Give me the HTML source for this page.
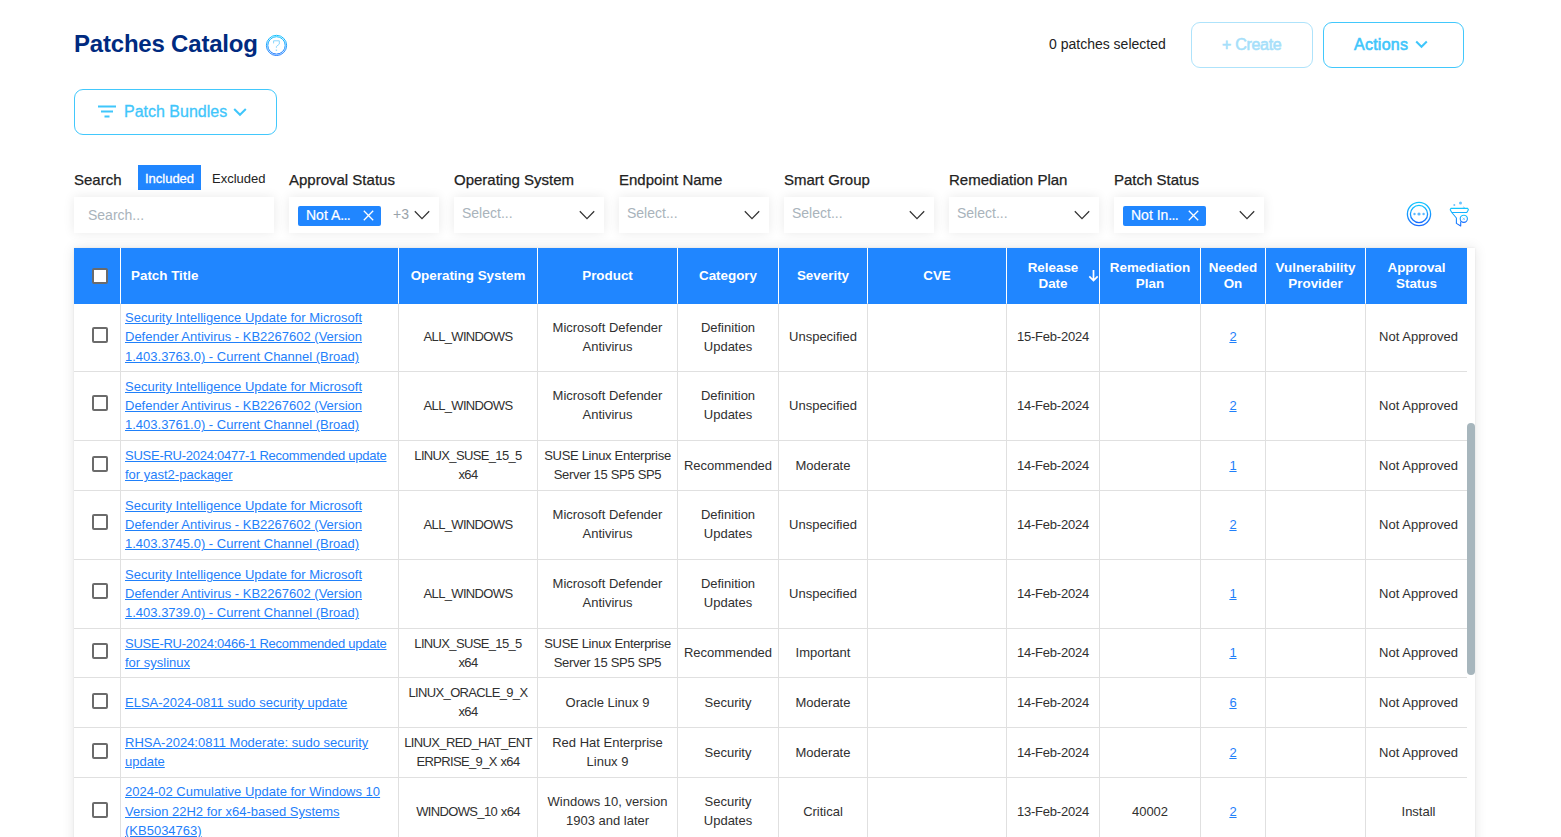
<!DOCTYPE html>
<html><head><meta charset="utf-8"><style>
*{box-sizing:border-box;margin:0;padding:0}
html,body{width:1561px;height:837px;overflow:hidden;background:#fff;font-family:"Liberation Sans", sans-serif;color:#222}
.abs{position:absolute}
.title{left:74px;top:26px;font-size:24px;font-weight:700;color:#002a80;letter-spacing:-0.2px;white-space:nowrap;line-height:36px}
.btn{position:absolute;border:1px solid #42c8fc;border-radius:9px;background:#fff;color:#3fc6fb;font-size:15px;font-weight:700;display:flex;align-items:center;justify-content:center;white-space:nowrap}
.lbl{position:absolute;font-size:15px;color:#222;white-space:nowrap;-webkit-text-stroke:0.25px #222;line-height:18px}
.sel{position:absolute;top:197px;height:36px;width:150px;background:#fff;box-shadow:0 0 12px rgba(0,0,0,0.09)}
.ph{position:absolute;left:8px;top:8px;font-size:14px;color:#a9b3bb;white-space:nowrap;line-height:16px}
.chev{position:absolute;top:11px}
.chip{position:absolute;top:9px;height:20px;background:#2086ff;border-radius:2px;color:#fff;font-size:14px;white-space:nowrap;line-height:18px;padding-left:8px;-webkit-text-stroke:0.2px #fff}
.tbl{position:absolute;left:74px;top:248px;width:1401px;height:620px;background:#fff;box-shadow:0 0 12px rgba(0,0,0,0.10),0 0 2px rgba(0,0,0,0.08);overflow:hidden}
.hd{position:absolute;top:0;height:56px;padding-bottom:1px;background:#2086ff;color:#fff;font-weight:700;font-size:13.4px;line-height:16px;display:flex;align-items:center;justify-content:center;text-align:center;white-space:nowrap}
.vsep{position:absolute;width:1px}
.cell{position:absolute;display:flex;align-items:center;justify-content:center;text-align:center;font-size:13px;line-height:19.3px;color:#222;white-space:nowrap}
.ln{position:absolute;font-size:13px;line-height:19px;color:#303030;white-space:nowrap;text-align:center;height:19px}
.lnk{color:#1f80fa;text-decoration:underline;text-underline-offset:1px}
.cb{position:absolute;width:16px;height:16px;border:2px solid #6b6b6b;border-radius:2px;background:#fff}
</style></head><body>
<div class="abs title">Patches Catalog</div><svg class="abs" style="left:265px;top:34px" width="23" height="23" viewBox="0 0 23 23"><defs><linearGradient id="g0" x1="0" y1="0" x2="0" y2="1"><stop offset="0" stop-color="#15c3ff"/><stop offset="1" stop-color="#1a78ff"/></linearGradient></defs><circle cx="11.5" cy="11.4" r="10.1" fill="none" stroke="url(#g0)" stroke-width="1"/><circle cx="11.5" cy="11.4" r="8.7" fill="none" stroke="url(#g0)" stroke-width="1"/><path d="M8.6 9.4V6.8H14.3V10.1L11.4 12.5V13.8" fill="none" stroke="#7fd2fd" stroke-width="0.9"/><rect x="10.7" y="15.6" width="1.4" height="1.2" fill="#8ad3fd"/></svg><div class="abs" style="left:1049px;top:36px;font-size:14px;color:#222;white-space:nowrap;line-height:16px">0 patches selected</div><div class="btn" style="left:1191px;top:22px;width:122px;height:46px;border-color:#aee3fb;color:#a6dffa;font-weight:400;font-size:16px;-webkit-text-stroke:0.6px #a6dffa"><span style="position:absolute;left:30px;top:13px;line-height:18px;letter-spacing:-0.3px">+ Create</span></div><div class="btn" style="left:1323px;top:22px;width:141px;height:46px;font-weight:400;font-size:16px;-webkit-text-stroke:0.6px #3fc6fb"><span style="position:absolute;left:30px;top:13px;line-height:18px;letter-spacing:0.25px">Actions</span><svg style="position:absolute;left:91px;top:17px" width="13" height="9" viewBox="0 0 13 9"><path d="M1.2 1.5 6.5 6.8 11.8 1.5" fill="none" stroke="#3fc6fb" stroke-width="2"/></svg></div><div class="btn" style="left:74px;top:89px;width:203px;height:46px;font-weight:400;font-size:16px;-webkit-text-stroke:0.3px #3fc6fb;justify-content:flex-start"><svg style="position:absolute;left:22px;top:15px" width="20" height="14" viewBox="0 0 20 14"><path d="M1 1.5h18M4 6.5h12M7.5 11.5h5" stroke="#3fc6fb" stroke-width="2"/></svg><span style="position:absolute;left:49px;top:13px;line-height:18px">Patch Bundles</span><svg style="position:absolute;left:158px;top:17px" width="14" height="10" viewBox="0 0 14 10"><path d="M1.2 2 7 7.8 12.8 2" fill="none" stroke="#3fc6fb" stroke-width="2"/></svg></div><div class="lbl" style="left:74px;top:171px">Search</div><div class="lbl" style="left:289px;top:171px">Approval Status</div><div class="lbl" style="left:454px;top:171px">Operating System</div><div class="lbl" style="left:619px;top:171px">Endpoint Name</div><div class="lbl" style="left:784px;top:171px">Smart Group</div><div class="lbl" style="left:949px;top:171px">Remediation Plan</div><div class="lbl" style="left:1114px;top:171px">Patch Status</div><div class="abs" style="left:138px;top:165px;width:63px;height:25px;background:#2086ff;color:#fff;font-size:13px;line-height:27px;text-align:center;-webkit-text-stroke:0.3px #fff">Included</div><div class="abs" style="left:212px;top:166px;font-size:13px;line-height:25px;color:#222">Excluded</div><div class="sel" style="left:74px;width:200px"><div class="ph" style="left:14px;top:10px">Search...</div></div><div class="sel" style="left:289px"><div class="chip" style="left:9px;width:83px">Not A<span style="letter-spacing:-0.7px">...</span><svg style="position:absolute;left:65px;top:4px" width="11" height="11" viewBox="0 0 11 11"><path d="M0.8 0.8 10.2 10.2M10.2 0.8 0.8 10.2" stroke="#fff" stroke-width="1.3"/></svg></div><div class="abs" style="left:104px;top:9px;font-size:14px;color:#9aa3aa;line-height:16px">+3</div><svg class="chev" style="left:125px" width="16" height="14" viewBox="0 0 16 14"><path d="M0.8 3.3 8 10.6 15.2 3.3" fill="none" stroke="#333" stroke-width="1.25"/></svg></div><div class="sel" style="left:454px"><div class="ph">Select...</div><svg class="chev" style="left:125px" width="16" height="14" viewBox="0 0 16 14"><path d="M0.8 3.3 8 10.6 15.2 3.3" fill="none" stroke="#333" stroke-width="1.25"/></svg></div><div class="sel" style="left:619px"><div class="ph">Select...</div><svg class="chev" style="left:125px" width="16" height="14" viewBox="0 0 16 14"><path d="M0.8 3.3 8 10.6 15.2 3.3" fill="none" stroke="#333" stroke-width="1.25"/></svg></div><div class="sel" style="left:784px"><div class="ph">Select...</div><svg class="chev" style="left:125px" width="16" height="14" viewBox="0 0 16 14"><path d="M0.8 3.3 8 10.6 15.2 3.3" fill="none" stroke="#333" stroke-width="1.25"/></svg></div><div class="sel" style="left:949px"><div class="ph">Select...</div><svg class="chev" style="left:125px" width="16" height="14" viewBox="0 0 16 14"><path d="M0.8 3.3 8 10.6 15.2 3.3" fill="none" stroke="#333" stroke-width="1.25"/></svg></div><div class="sel" style="left:1114px"><div class="chip" style="left:9px;width:83px">Not In<span style="letter-spacing:-0.7px">...</span><svg style="position:absolute;left:65px;top:4px" width="11" height="11" viewBox="0 0 11 11"><path d="M0.8 0.8 10.2 10.2M10.2 0.8 0.8 10.2" stroke="#fff" stroke-width="1.3"/></svg></div><svg class="chev" style="left:125px" width="16" height="14" viewBox="0 0 16 14"><path d="M0.8 3.3 8 10.6 15.2 3.3" fill="none" stroke="#333" stroke-width="1.25"/></svg></div><svg class="abs" style="left:1405px;top:200px" width="28" height="28" viewBox="0 0 28 28"><defs><linearGradient id="g1" x1="0" y1="0" x2="0" y2="1"><stop offset="0" stop-color="#12c6ff"/><stop offset="1" stop-color="#1a6dff"/></linearGradient></defs><circle cx="14" cy="14" r="11.6" fill="none" stroke="url(#g1)" stroke-width="1.3"/><circle cx="14" cy="14" r="8.6" fill="none" stroke="url(#g1)" stroke-width="1.3"/><circle cx="9.5" cy="14" r="1.2" fill="#5cb8ff"/><circle cx="14" cy="14" r="1.6" fill="#5cb8ff"/><circle cx="18.6" cy="14" r="1.2" fill="#5cb8ff"/></svg><svg class="abs" style="left:1448px;top:200px" width="22" height="28" viewBox="0 0 22 28"><defs><linearGradient id="g2" x1="0" y1="0" x2="0" y2="1"><stop offset="0" stop-color="#12c6ff"/><stop offset="1" stop-color="#1a6dff"/></linearGradient></defs><path d="M3 8.4h16.6l.8 1.3-1.6 2.8h-15l-1.6-2.8z M3.8 12.5l4.6 5.5v5.4l4.3 2.6v-4.4" fill="none" stroke="url(#g2)" stroke-width="1.1" stroke-linejoin="round"/><circle cx="15.8" cy="18.8" r="3.6" fill="none" stroke="url(#g2)" stroke-width="1.1"/><path d="M14.7 17.7l2.2 2.2M16.9 17.7l-2.2 2.2" stroke="#7cc6ff" stroke-width="0.9"/><circle cx="6.3" cy="5" r="1" fill="#6cc3ff"/><circle cx="12.5" cy="3" r="1.5" fill="#6cc3ff"/><path d="M14.8 7.8l1-0.8 1 .8" fill="none" stroke="#6cc3ff" stroke-width="0.9"/></svg><div class="tbl"><div class="hd" style="left:0;width:46px"></div><div class="cb" style="left:18px;top:20px"></div><div class="vsep" style="left:46px;top:0;height:56px;background:#fff"></div><div class="hd" style="left:47px;width:277px;justify-content:flex-start;padding-left:10px">Patch Title</div><div class="vsep" style="left:324px;top:0;height:56px;background:#fff"></div><div class="hd" style="left:325px;width:138px;justify-content:center;">Operating System</div><div class="vsep" style="left:463px;top:0;height:56px;background:#fff"></div><div class="hd" style="left:464px;width:139px;justify-content:center;">Product</div><div class="vsep" style="left:603px;top:0;height:56px;background:#fff"></div><div class="hd" style="left:604px;width:100px;justify-content:center;">Category</div><div class="vsep" style="left:704px;top:0;height:56px;background:#fff"></div><div class="hd" style="left:705px;width:88px;justify-content:center;">Severity</div><div class="vsep" style="left:793px;top:0;height:56px;background:#fff"></div><div class="hd" style="left:794px;width:138px;justify-content:center;">CVE</div><div class="vsep" style="left:932px;top:0;height:56px;background:#fff"></div><div class="hd" style="left:933px;width:92px;justify-content:center;">Release<br>Date<svg style="position:absolute;left:81px;top:21px" width="11" height="13" viewBox="0 0 11 13"><path d="M5.5 1v10.5M1.3 7.3l4.2 4.2 4.2-4.2" fill="none" stroke="#fff" stroke-width="1.7"/></svg></div><div class="vsep" style="left:1025px;top:0;height:56px;background:#fff"></div><div class="hd" style="left:1026px;width:100px;justify-content:center;">Remediation<br>Plan</div><div class="vsep" style="left:1126px;top:0;height:56px;background:#fff"></div><div class="hd" style="left:1127px;width:64px;justify-content:center;">Needed<br>On</div><div class="vsep" style="left:1191px;top:0;height:56px;background:#fff"></div><div class="hd" style="left:1192px;width:99px;justify-content:center;">Vulnerability<br>Provider</div><div class="vsep" style="left:1291px;top:0;height:56px;background:#fff"></div><div class="hd" style="left:1292px;width:101px;justify-content:center;">Approval<br>Status</div><div class="abs" style="left:0;top:123px;width:1393px;height:1px;background:#e0e0e0"></div><div class="cb" style="left:18px;top:79px"></div><div class="vsep" style="left:46px;top:55px;height:68px;background:#e0e0e0"></div><div class="ln" style="left:47px;top:60px;width:277px;text-align:left;padding-left:4px;"><span class="lnk">Security Intelligence Update for Microsoft</span></div><div class="ln" style="left:47px;top:79px;width:277px;text-align:left;padding-left:4px;"><span class="lnk">Defender Antivirus - KB2267602 (Version</span></div><div class="ln" style="left:47px;top:99px;width:277px;text-align:left;padding-left:4px;"><span class="lnk">1.403.3763.0) - Current Channel (Broad)</span></div><div class="vsep" style="left:324px;top:55px;height:68px;background:#e0e0e0"></div><div class="ln" style="left:325px;top:79px;width:138px;letter-spacing:-0.65px;word-spacing:0.8px;">ALL_WINDOWS</div><div class="vsep" style="left:463px;top:55px;height:68px;background:#e0e0e0"></div><div class="ln" style="left:464px;top:70px;width:139px;">Microsoft Defender</div><div class="ln" style="left:464px;top:89px;width:139px;">Antivirus</div><div class="vsep" style="left:603px;top:55px;height:68px;background:#e0e0e0"></div><div class="ln" style="left:604px;top:70px;width:100px;">Definition</div><div class="ln" style="left:604px;top:89px;width:100px;">Updates</div><div class="vsep" style="left:704px;top:55px;height:68px;background:#e0e0e0"></div><div class="ln" style="left:705px;top:79px;width:88px;">Unspecified</div><div class="vsep" style="left:793px;top:55px;height:68px;background:#e0e0e0"></div><div class="vsep" style="left:932px;top:55px;height:68px;background:#e0e0e0"></div><div class="ln" style="left:933px;top:79px;width:92px;"><span style="letter-spacing:-0.2px">15-Feb-2024</span></div><div class="vsep" style="left:1025px;top:55px;height:68px;background:#e0e0e0"></div><div class="vsep" style="left:1126px;top:55px;height:68px;background:#e0e0e0"></div><div class="ln" style="left:1127px;top:79px;width:64px;"><span class="lnk">2</span></div><div class="vsep" style="left:1191px;top:55px;height:68px;background:#e0e0e0"></div><div class="vsep" style="left:1291px;top:55px;height:68px;background:#e0e0e0"></div><div class="ln" style="left:1292px;top:79px;width:101px;padding-left:4px;">Not Approved</div><div class="abs" style="left:0;top:192px;width:1393px;height:1px;background:#e0e0e0"></div><div class="cb" style="left:18px;top:147px"></div><div class="vsep" style="left:46px;top:123px;height:69px;background:#e0e0e0"></div><div class="ln" style="left:47px;top:129px;width:277px;text-align:left;padding-left:4px;"><span class="lnk">Security Intelligence Update for Microsoft</span></div><div class="ln" style="left:47px;top:148px;width:277px;text-align:left;padding-left:4px;"><span class="lnk">Defender Antivirus - KB2267602 (Version</span></div><div class="ln" style="left:47px;top:167px;width:277px;text-align:left;padding-left:4px;"><span class="lnk">1.403.3761.0) - Current Channel (Broad)</span></div><div class="vsep" style="left:324px;top:123px;height:69px;background:#e0e0e0"></div><div class="ln" style="left:325px;top:148px;width:138px;letter-spacing:-0.65px;word-spacing:0.8px;">ALL_WINDOWS</div><div class="vsep" style="left:463px;top:123px;height:69px;background:#e0e0e0"></div><div class="ln" style="left:464px;top:138px;width:139px;">Microsoft Defender</div><div class="ln" style="left:464px;top:157px;width:139px;">Antivirus</div><div class="vsep" style="left:603px;top:123px;height:69px;background:#e0e0e0"></div><div class="ln" style="left:604px;top:138px;width:100px;">Definition</div><div class="ln" style="left:604px;top:157px;width:100px;">Updates</div><div class="vsep" style="left:704px;top:123px;height:69px;background:#e0e0e0"></div><div class="ln" style="left:705px;top:148px;width:88px;">Unspecified</div><div class="vsep" style="left:793px;top:123px;height:69px;background:#e0e0e0"></div><div class="vsep" style="left:932px;top:123px;height:69px;background:#e0e0e0"></div><div class="ln" style="left:933px;top:148px;width:92px;"><span style="letter-spacing:-0.2px">14-Feb-2024</span></div><div class="vsep" style="left:1025px;top:123px;height:69px;background:#e0e0e0"></div><div class="vsep" style="left:1126px;top:123px;height:69px;background:#e0e0e0"></div><div class="ln" style="left:1127px;top:148px;width:64px;"><span class="lnk">2</span></div><div class="vsep" style="left:1191px;top:123px;height:69px;background:#e0e0e0"></div><div class="vsep" style="left:1291px;top:123px;height:69px;background:#e0e0e0"></div><div class="ln" style="left:1292px;top:148px;width:101px;padding-left:4px;">Not Approved</div><div class="abs" style="left:0;top:242px;width:1393px;height:1px;background:#e0e0e0"></div><div class="cb" style="left:18px;top:208px"></div><div class="vsep" style="left:46px;top:192px;height:50px;background:#e0e0e0"></div><div class="ln" style="left:47px;top:198px;width:277px;text-align:left;padding-left:4px;"><span class="lnk"><span style="letter-spacing:-0.25px">SUSE-RU-2024:0477-1 Recommended update</span></span></div><div class="ln" style="left:47px;top:217px;width:277px;text-align:left;padding-left:4px;"><span class="lnk">for yast2-packager</span></div><div class="vsep" style="left:324px;top:192px;height:50px;background:#e0e0e0"></div><div class="ln" style="left:325px;top:198px;width:138px;letter-spacing:-0.65px;word-spacing:0.8px;">LINUX_SUSE_15_5</div><div class="ln" style="left:325px;top:217px;width:138px;letter-spacing:-0.65px;word-spacing:0.8px;">x64</div><div class="vsep" style="left:463px;top:192px;height:50px;background:#e0e0e0"></div><div class="ln" style="left:464px;top:198px;width:139px;"><span style="letter-spacing:-0.3px">SUSE Linux Enterprise</span></div><div class="ln" style="left:464px;top:217px;width:139px;"><span style="letter-spacing:-0.3px">Server 15 SP5 SP5</span></div><div class="vsep" style="left:603px;top:192px;height:50px;background:#e0e0e0"></div><div class="ln" style="left:604px;top:208px;width:100px;">Recommended</div><div class="vsep" style="left:704px;top:192px;height:50px;background:#e0e0e0"></div><div class="ln" style="left:705px;top:208px;width:88px;">Moderate</div><div class="vsep" style="left:793px;top:192px;height:50px;background:#e0e0e0"></div><div class="vsep" style="left:932px;top:192px;height:50px;background:#e0e0e0"></div><div class="ln" style="left:933px;top:208px;width:92px;"><span style="letter-spacing:-0.2px">14-Feb-2024</span></div><div class="vsep" style="left:1025px;top:192px;height:50px;background:#e0e0e0"></div><div class="vsep" style="left:1126px;top:192px;height:50px;background:#e0e0e0"></div><div class="ln" style="left:1127px;top:208px;width:64px;"><span class="lnk">1</span></div><div class="vsep" style="left:1191px;top:192px;height:50px;background:#e0e0e0"></div><div class="vsep" style="left:1291px;top:192px;height:50px;background:#e0e0e0"></div><div class="ln" style="left:1292px;top:208px;width:101px;padding-left:4px;">Not Approved</div><div class="abs" style="left:0;top:311px;width:1393px;height:1px;background:#e0e0e0"></div><div class="cb" style="left:18px;top:266px"></div><div class="vsep" style="left:46px;top:242px;height:69px;background:#e0e0e0"></div><div class="ln" style="left:47px;top:248px;width:277px;text-align:left;padding-left:4px;"><span class="lnk">Security Intelligence Update for Microsoft</span></div><div class="ln" style="left:47px;top:267px;width:277px;text-align:left;padding-left:4px;"><span class="lnk">Defender Antivirus - KB2267602 (Version</span></div><div class="ln" style="left:47px;top:286px;width:277px;text-align:left;padding-left:4px;"><span class="lnk">1.403.3745.0) - Current Channel (Broad)</span></div><div class="vsep" style="left:324px;top:242px;height:69px;background:#e0e0e0"></div><div class="ln" style="left:325px;top:267px;width:138px;letter-spacing:-0.65px;word-spacing:0.8px;">ALL_WINDOWS</div><div class="vsep" style="left:463px;top:242px;height:69px;background:#e0e0e0"></div><div class="ln" style="left:464px;top:257px;width:139px;">Microsoft Defender</div><div class="ln" style="left:464px;top:276px;width:139px;">Antivirus</div><div class="vsep" style="left:603px;top:242px;height:69px;background:#e0e0e0"></div><div class="ln" style="left:604px;top:257px;width:100px;">Definition</div><div class="ln" style="left:604px;top:276px;width:100px;">Updates</div><div class="vsep" style="left:704px;top:242px;height:69px;background:#e0e0e0"></div><div class="ln" style="left:705px;top:267px;width:88px;">Unspecified</div><div class="vsep" style="left:793px;top:242px;height:69px;background:#e0e0e0"></div><div class="vsep" style="left:932px;top:242px;height:69px;background:#e0e0e0"></div><div class="ln" style="left:933px;top:267px;width:92px;"><span style="letter-spacing:-0.2px">14-Feb-2024</span></div><div class="vsep" style="left:1025px;top:242px;height:69px;background:#e0e0e0"></div><div class="vsep" style="left:1126px;top:242px;height:69px;background:#e0e0e0"></div><div class="ln" style="left:1127px;top:267px;width:64px;"><span class="lnk">2</span></div><div class="vsep" style="left:1191px;top:242px;height:69px;background:#e0e0e0"></div><div class="vsep" style="left:1291px;top:242px;height:69px;background:#e0e0e0"></div><div class="ln" style="left:1292px;top:267px;width:101px;padding-left:4px;">Not Approved</div><div class="abs" style="left:0;top:380px;width:1393px;height:1px;background:#e0e0e0"></div><div class="cb" style="left:18px;top:335px"></div><div class="vsep" style="left:46px;top:311px;height:69px;background:#e0e0e0"></div><div class="ln" style="left:47px;top:317px;width:277px;text-align:left;padding-left:4px;"><span class="lnk">Security Intelligence Update for Microsoft</span></div><div class="ln" style="left:47px;top:336px;width:277px;text-align:left;padding-left:4px;"><span class="lnk">Defender Antivirus - KB2267602 (Version</span></div><div class="ln" style="left:47px;top:355px;width:277px;text-align:left;padding-left:4px;"><span class="lnk">1.403.3739.0) - Current Channel (Broad)</span></div><div class="vsep" style="left:324px;top:311px;height:69px;background:#e0e0e0"></div><div class="ln" style="left:325px;top:336px;width:138px;letter-spacing:-0.65px;word-spacing:0.8px;">ALL_WINDOWS</div><div class="vsep" style="left:463px;top:311px;height:69px;background:#e0e0e0"></div><div class="ln" style="left:464px;top:326px;width:139px;">Microsoft Defender</div><div class="ln" style="left:464px;top:345px;width:139px;">Antivirus</div><div class="vsep" style="left:603px;top:311px;height:69px;background:#e0e0e0"></div><div class="ln" style="left:604px;top:326px;width:100px;">Definition</div><div class="ln" style="left:604px;top:345px;width:100px;">Updates</div><div class="vsep" style="left:704px;top:311px;height:69px;background:#e0e0e0"></div><div class="ln" style="left:705px;top:336px;width:88px;">Unspecified</div><div class="vsep" style="left:793px;top:311px;height:69px;background:#e0e0e0"></div><div class="vsep" style="left:932px;top:311px;height:69px;background:#e0e0e0"></div><div class="ln" style="left:933px;top:336px;width:92px;"><span style="letter-spacing:-0.2px">14-Feb-2024</span></div><div class="vsep" style="left:1025px;top:311px;height:69px;background:#e0e0e0"></div><div class="vsep" style="left:1126px;top:311px;height:69px;background:#e0e0e0"></div><div class="ln" style="left:1127px;top:336px;width:64px;"><span class="lnk">1</span></div><div class="vsep" style="left:1191px;top:311px;height:69px;background:#e0e0e0"></div><div class="vsep" style="left:1291px;top:311px;height:69px;background:#e0e0e0"></div><div class="ln" style="left:1292px;top:336px;width:101px;padding-left:4px;">Not Approved</div><div class="abs" style="left:0;top:429px;width:1393px;height:1px;background:#e0e0e0"></div><div class="cb" style="left:18px;top:395px"></div><div class="vsep" style="left:46px;top:380px;height:49px;background:#e0e0e0"></div><div class="ln" style="left:47px;top:386px;width:277px;text-align:left;padding-left:4px;"><span class="lnk"><span style="letter-spacing:-0.25px">SUSE-RU-2024:0466-1 Recommended update</span></span></div><div class="ln" style="left:47px;top:405px;width:277px;text-align:left;padding-left:4px;"><span class="lnk">for syslinux</span></div><div class="vsep" style="left:324px;top:380px;height:49px;background:#e0e0e0"></div><div class="ln" style="left:325px;top:386px;width:138px;letter-spacing:-0.65px;word-spacing:0.8px;">LINUX_SUSE_15_5</div><div class="ln" style="left:325px;top:405px;width:138px;letter-spacing:-0.65px;word-spacing:0.8px;">x64</div><div class="vsep" style="left:463px;top:380px;height:49px;background:#e0e0e0"></div><div class="ln" style="left:464px;top:386px;width:139px;"><span style="letter-spacing:-0.3px">SUSE Linux Enterprise</span></div><div class="ln" style="left:464px;top:405px;width:139px;"><span style="letter-spacing:-0.3px">Server 15 SP5 SP5</span></div><div class="vsep" style="left:603px;top:380px;height:49px;background:#e0e0e0"></div><div class="ln" style="left:604px;top:395px;width:100px;">Recommended</div><div class="vsep" style="left:704px;top:380px;height:49px;background:#e0e0e0"></div><div class="ln" style="left:705px;top:395px;width:88px;">Important</div><div class="vsep" style="left:793px;top:380px;height:49px;background:#e0e0e0"></div><div class="vsep" style="left:932px;top:380px;height:49px;background:#e0e0e0"></div><div class="ln" style="left:933px;top:395px;width:92px;"><span style="letter-spacing:-0.2px">14-Feb-2024</span></div><div class="vsep" style="left:1025px;top:380px;height:49px;background:#e0e0e0"></div><div class="vsep" style="left:1126px;top:380px;height:49px;background:#e0e0e0"></div><div class="ln" style="left:1127px;top:395px;width:64px;"><span class="lnk">1</span></div><div class="vsep" style="left:1191px;top:380px;height:49px;background:#e0e0e0"></div><div class="vsep" style="left:1291px;top:380px;height:49px;background:#e0e0e0"></div><div class="ln" style="left:1292px;top:395px;width:101px;padding-left:4px;">Not Approved</div><div class="abs" style="left:0;top:479px;width:1393px;height:1px;background:#e0e0e0"></div><div class="cb" style="left:18px;top:445px"></div><div class="vsep" style="left:46px;top:429px;height:50px;background:#e0e0e0"></div><div class="ln" style="left:47px;top:445px;width:277px;text-align:left;padding-left:4px;"><span class="lnk">ELSA-2024-0811 sudo security update</span></div><div class="vsep" style="left:324px;top:429px;height:50px;background:#e0e0e0"></div><div class="ln" style="left:325px;top:435px;width:138px;letter-spacing:-0.65px;word-spacing:0.8px;">LINUX_ORACLE_9_X</div><div class="ln" style="left:325px;top:454px;width:138px;letter-spacing:-0.65px;word-spacing:0.8px;">x64</div><div class="vsep" style="left:463px;top:429px;height:50px;background:#e0e0e0"></div><div class="ln" style="left:464px;top:445px;width:139px;">Oracle Linux 9</div><div class="vsep" style="left:603px;top:429px;height:50px;background:#e0e0e0"></div><div class="ln" style="left:604px;top:445px;width:100px;">Security</div><div class="vsep" style="left:704px;top:429px;height:50px;background:#e0e0e0"></div><div class="ln" style="left:705px;top:445px;width:88px;">Moderate</div><div class="vsep" style="left:793px;top:429px;height:50px;background:#e0e0e0"></div><div class="vsep" style="left:932px;top:429px;height:50px;background:#e0e0e0"></div><div class="ln" style="left:933px;top:445px;width:92px;"><span style="letter-spacing:-0.2px">14-Feb-2024</span></div><div class="vsep" style="left:1025px;top:429px;height:50px;background:#e0e0e0"></div><div class="vsep" style="left:1126px;top:429px;height:50px;background:#e0e0e0"></div><div class="ln" style="left:1127px;top:445px;width:64px;"><span class="lnk">6</span></div><div class="vsep" style="left:1191px;top:429px;height:50px;background:#e0e0e0"></div><div class="vsep" style="left:1291px;top:429px;height:50px;background:#e0e0e0"></div><div class="ln" style="left:1292px;top:445px;width:101px;padding-left:4px;">Not Approved</div><div class="abs" style="left:0;top:529px;width:1393px;height:1px;background:#e0e0e0"></div><div class="cb" style="left:18px;top:495px"></div><div class="vsep" style="left:46px;top:479px;height:50px;background:#e0e0e0"></div><div class="ln" style="left:47px;top:485px;width:277px;text-align:left;padding-left:4px;"><span class="lnk">RHSA-2024:0811 Moderate: sudo security</span></div><div class="ln" style="left:47px;top:504px;width:277px;text-align:left;padding-left:4px;"><span class="lnk">update</span></div><div class="vsep" style="left:324px;top:479px;height:50px;background:#e0e0e0"></div><div class="ln" style="left:325px;top:485px;width:138px;letter-spacing:-0.65px;word-spacing:0.8px;">LINUX_RED_HAT_ENT</div><div class="ln" style="left:325px;top:504px;width:138px;letter-spacing:-0.65px;word-spacing:0.8px;">ERPRISE_9_X x64</div><div class="vsep" style="left:463px;top:479px;height:50px;background:#e0e0e0"></div><div class="ln" style="left:464px;top:485px;width:139px;">Red Hat Enterprise</div><div class="ln" style="left:464px;top:504px;width:139px;">Linux 9</div><div class="vsep" style="left:603px;top:479px;height:50px;background:#e0e0e0"></div><div class="ln" style="left:604px;top:495px;width:100px;">Security</div><div class="vsep" style="left:704px;top:479px;height:50px;background:#e0e0e0"></div><div class="ln" style="left:705px;top:495px;width:88px;">Moderate</div><div class="vsep" style="left:793px;top:479px;height:50px;background:#e0e0e0"></div><div class="vsep" style="left:932px;top:479px;height:50px;background:#e0e0e0"></div><div class="ln" style="left:933px;top:495px;width:92px;"><span style="letter-spacing:-0.2px">14-Feb-2024</span></div><div class="vsep" style="left:1025px;top:479px;height:50px;background:#e0e0e0"></div><div class="vsep" style="left:1126px;top:479px;height:50px;background:#e0e0e0"></div><div class="ln" style="left:1127px;top:495px;width:64px;"><span class="lnk">2</span></div><div class="vsep" style="left:1191px;top:479px;height:50px;background:#e0e0e0"></div><div class="vsep" style="left:1291px;top:479px;height:50px;background:#e0e0e0"></div><div class="ln" style="left:1292px;top:495px;width:101px;padding-left:4px;">Not Approved</div><div class="abs" style="left:0;top:598px;width:1393px;height:1px;background:#e0e0e0"></div><div class="cb" style="left:18px;top:554px"></div><div class="vsep" style="left:46px;top:529px;height:69px;background:#e0e0e0"></div><div class="ln" style="left:47px;top:534px;width:277px;text-align:left;padding-left:4px;"><span class="lnk">2024-02 Cumulative Update for Windows 10</span></div><div class="ln" style="left:47px;top:554px;width:277px;text-align:left;padding-left:4px;"><span class="lnk">Version 22H2 for x64-based Systems</span></div><div class="ln" style="left:47px;top:573px;width:277px;text-align:left;padding-left:4px;"><span class="lnk">(KB5034763)</span></div><div class="vsep" style="left:324px;top:529px;height:69px;background:#e0e0e0"></div><div class="ln" style="left:325px;top:554px;width:138px;letter-spacing:-0.65px;word-spacing:0.8px;">WINDOWS_10 x64</div><div class="vsep" style="left:463px;top:529px;height:69px;background:#e0e0e0"></div><div class="ln" style="left:464px;top:544px;width:139px;">Windows 10, version</div><div class="ln" style="left:464px;top:563px;width:139px;">1903 and later</div><div class="vsep" style="left:603px;top:529px;height:69px;background:#e0e0e0"></div><div class="ln" style="left:604px;top:544px;width:100px;">Security</div><div class="ln" style="left:604px;top:563px;width:100px;">Updates</div><div class="vsep" style="left:704px;top:529px;height:69px;background:#e0e0e0"></div><div class="ln" style="left:705px;top:554px;width:88px;">Critical</div><div class="vsep" style="left:793px;top:529px;height:69px;background:#e0e0e0"></div><div class="vsep" style="left:932px;top:529px;height:69px;background:#e0e0e0"></div><div class="ln" style="left:933px;top:554px;width:92px;"><span style="letter-spacing:-0.2px">13-Feb-2024</span></div><div class="vsep" style="left:1025px;top:529px;height:69px;background:#e0e0e0"></div><div class="ln" style="left:1026px;top:554px;width:100px;">40002</div><div class="vsep" style="left:1126px;top:529px;height:69px;background:#e0e0e0"></div><div class="ln" style="left:1127px;top:554px;width:64px;"><span class="lnk">2</span></div><div class="vsep" style="left:1191px;top:529px;height:69px;background:#e0e0e0"></div><div class="vsep" style="left:1291px;top:529px;height:69px;background:#e0e0e0"></div><div class="ln" style="left:1292px;top:554px;width:101px;padding-left:4px;">Install</div><div class="abs" style="left:1393px;top:175px;width:8px;height:252px;background:#a7b6bd;border-radius:4px"></div></div>
</body></html>
